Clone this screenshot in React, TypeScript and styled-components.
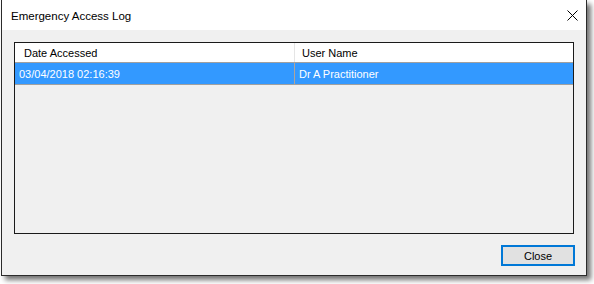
import { FC } from 'react'
import { createGlobalStyle, styled } from 'styled-components'

const GlobalStyle = createGlobalStyle`
  html, body {
    margin: 0;
    padding: 0;
    background: #ffffff;
  }
  body {
    font-family: "Liberation Sans", Arial, sans-serif;
    font-size: 11px;
  }
`

const Stage = styled.div`
  padding-left: 1px;
  width: 594px;
  height: 284px;
  box-sizing: border-box;
`

const Window = styled.div`
  box-sizing: border-box;
  width: 586px;
  height: 276px;
  border: 1px solid #2b2b2b;
  border-top: none;
  background: #f0f0f0;
  box-shadow: 4px 4px 5px rgba(0, 0, 0, 0.55);
  display: flex;
  flex-direction: column;
`

const TitleBar = styled.div`
  height: 30px;
  background: #ffffff;
  display: flex;
  align-items: center;
  justify-content: space-between;
  padding: 1px 8px 0 9px;
  box-sizing: border-box;
`

const Title = styled.span`
  color: #000;
  font-size: 11.5px;
`

const CloseX = styled.svg`
  width: 11px;
  height: 11px;
`

const Body = styled.div`
  flex: 1;
  display: flex;
  flex-direction: column;
  padding: 12px 12px 8px 12px;
`

const ListBox = styled.div`
  height: 192px;
  box-sizing: border-box;
  border: 1px solid #1a1a1a;
  background: #f0f0f0;
  display: flex;
  flex-direction: column;
`

const Row = styled.div<{ $header?: boolean; $selected?: boolean }>`
  display: grid;
  grid-template-columns: 279px 1px 1fr;
  height: ${({ $header }) => ($header ? 19 : 21)}px;
  background: ${({ $header, $selected }) =>
    $selected ? '#3399ff' : $header ? '#ffffff' : 'transparent'};
  color: ${({ $selected }) => ($selected ? '#ffffff' : '#000000')};
  border-bottom: 1px solid #a0a0a0;
  font-size: 11px;
`

const Cell = styled.div<{ $pad: number }>`
  display: flex;
  align-items: center;
  padding-left: ${({ $pad }) => $pad}px;
  white-space: nowrap;
  overflow: hidden;
`

const Divider = styled.div<{ $selected?: boolean }>`
  background: ${({ $selected }) => ($selected ? '#b0a49a' : '#e5e5e5')};
`

const Footer = styled.div`
  display: flex;
  justify-content: flex-end;
  margin-top: 11px;
`

const Button = styled.button`
  width: 74px;
  height: 21px;
  box-sizing: border-box;
  border: 2px solid #0078d7;
  background: #e1e1e1;
  font-family: "Liberation Sans", Arial, sans-serif;
  font-size: 11px;
  color: #000;
  padding: 0;
  margin-right: -1px;
`

const rows = [{ date: '03/04/2018 02:16:39', user: 'Dr A Practitioner' }]

const App: FC = () => {
  return (
    <Stage>
      <GlobalStyle />
      <Window>
        <TitleBar>
          <Title>Emergency Access Log</Title>
          <CloseX viewBox="0 0 11 11">
            <path d="M0.5 0.5 L10.5 10.5 M10.5 0.5 L0.5 10.5" stroke="#000" strokeWidth="1" />
          </CloseX>
        </TitleBar>
        <Body>
          <ListBox>
            <Row $header>
              <Cell $pad={9}>Date Accessed</Cell>
              <Divider />
              <Cell $pad={7}>User Name</Cell>
            </Row>
            {rows.map((row) => (
              <Row key={row.date} $selected>
                <Cell $pad={4}>{row.date}</Cell>
                <Divider $selected />
                <Cell $pad={4}>{row.user}</Cell>
              </Row>
            ))}
          </ListBox>
          <Footer>
            <Button>Close</Button>
          </Footer>
        </Body>
      </Window>
    </Stage>
  )
}

export default App
